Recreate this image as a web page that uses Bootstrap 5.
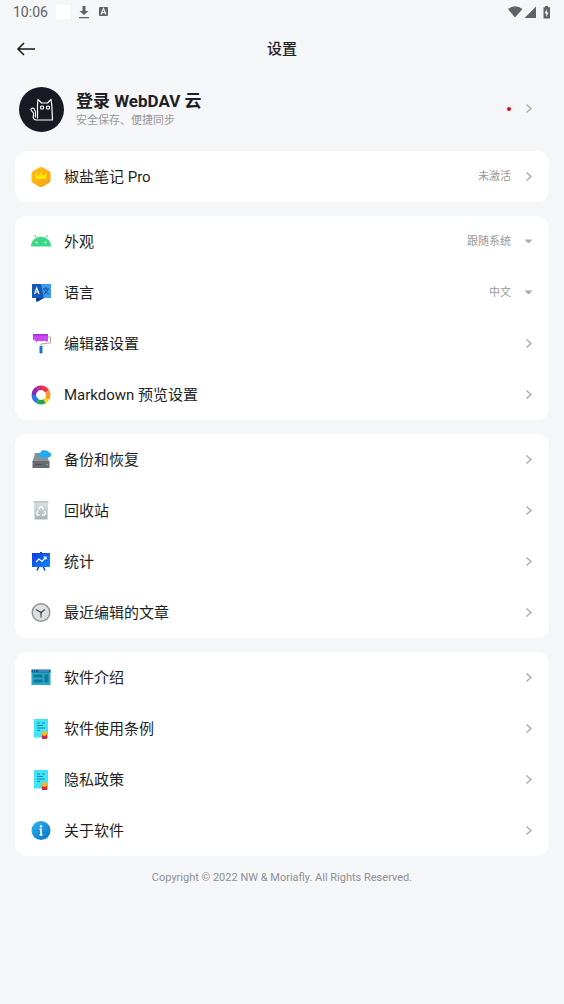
<!DOCTYPE html>
<html lang="zh-CN">
<head>
<meta charset="utf-8">
<meta name="viewport" content="width=device-width, initial-scale=1">
<title>设置</title>
<link href="https://cdn.jsdelivr.net/npm/bootstrap@5.3.0/dist/css/bootstrap.min.css" rel="stylesheet">
<style>
  body { background: #f5f6f8; color: #1d1f24; font-family: Roboto, "Noto Sans CJK SC", sans-serif; font-size: 15px; line-height: 20px; }
  a { color: inherit; text-decoration: none; }
  svg { display: block; flex: none; }
  .status-bar { height: 23px; padding: 0 13px; color: #606266; font-size: 14px; }
  .blank-app { width: 14px; height: 14px; background: #fff; }
  .top-bar { height: 52px; padding: 0 16px; }
  .top-bar h1 { font-size: 15px; line-height: 20px; font-weight: 500; }
  .side { width: 20px; }
  .profile { height: 68px; padding: 0 15px 0 4px; gap: 12px; }
  .profile-text { padding-top: 4px; }
  .avatar { width: 45px; height: 45px; background: #171a22; }
  .profile-name { font-size: 17px; line-height: 20px; font-weight: 700; }
  .note { font-size: 11px; line-height: 20px; color: #96989b; }
  .dot { width: 4px; height: 4px; background: #e60012; }
  .groups { padding: 0 15px; }
  .stack { gap: 14px; margin-top: 8px; }
  .group { border: 0; border-radius: 12px; background: #fff; overflow: hidden; }
  .item { height: 51px; padding: 0 15px 0 16px; gap: 13px; }
  .tail { gap: 11px; color: #96989b; font-size: 11px; }
  .pick { appearance: none; border: 0; background: none; padding: 0; color: inherit; font: inherit; text-align-last: right; outline-offset: 2px; }
  .pick option { color: #1d1f24; }
  footer { font-size: 11px; line-height: 16px; color: #8e9093; margin-top: 14px; }
</style>
</head>
<body>
<svg width="0" height="0" class="position-absolute" aria-hidden="true">
  <defs>
    <symbol id="chev" viewBox="0 0 12 12"><path d="M4.500 1.500L9 5.500l-4.500 4" fill="none" stroke="#a9abae" stroke-width="1.400"/></symbol>
    <symbol id="caret" viewBox="0 0 12 12"><path d="M3 3.500h7q0 1-3 3.500h-1Q3 4.500 3 3.500z" fill="#a9abae"/></symbol>
    <symbol id="doc" viewBox="0 0 20 20">
      <path d="M3 0h14v18.500H3z" fill="#43e3f8"/>
      <path d="M6 4h3M11 4h3M6 6.500h6M6 9h8M6 11.500h3" stroke="#1488a8" stroke-width="1"/>
      <path d="M11 15h5v5h-5z" fill="#d3264b"/><circle cx="13.500" cy="14.500" r="2.500" fill="#fdbd16"/>
    </symbol>
    <linearGradient id="gold" x2="1" y2="1"><stop stop-color="#ffc21d"/><stop offset="1" stop-color="#f6a313"/></linearGradient>
    <linearGradient id="screen" x2="1" y2="1"><stop stop-color="#1237dc"/><stop offset="1" stop-color="#0a8cff"/></linearGradient>
    <linearGradient id="blue" x2="1" y2="1"><stop stop-color="#2eb8ed"/><stop offset="1" stop-color="#0870cb"/></linearGradient>
    <linearGradient id="bin" x2="0" y2="1"><stop stop-color="#dde3e5"/><stop offset="1" stop-color="#a7b1b5"/></linearGradient>
  </defs>
</svg>

<div class="status-bar d-flex align-items-center justify-content-between">
  <div class="d-flex align-items-center gap-2">
    <span>10:06</span>
    <span class="blank-app"></span>
    <svg width="12" height="14" viewBox="0 0 12 14"><path d="M4.500 1h3v5h3L6 10 1.500 6h3zM1 12h10v1.300H1z" fill="#606266"/></svg>
    <svg width="11" height="11" viewBox="0 0 11 11"><rect x="1" y="1" width="9" height="9" rx="1" fill="#606266"/><path d="M3 8.500l2.500-6 2.500 6M4 6.600h3" fill="none" stroke="#f5f6f8" stroke-width="1.200"/></svg>
  </div>
  <svg width="44" height="14" viewBox="0 0 44 14"><path d="M1 4Q8-1.500 15.500 4L8 12.500z" fill="#606266"/><path d="M17.500 13L29 1.500V13z" fill="#606266"/><path d="M38 1h3v1.300h2V13.500h-6.500V2.300H38z" fill="#606266"/><path d="M40 4l-2.300 4.500h1.500V12l2.400-4.600H40z" fill="#f5f6f8"/></svg>
</div>

<header class="top-bar d-flex align-items-center">
  <a class="side" href="#" aria-label="返回"><svg width="20" height="20" viewBox="0 0 20 20"><path d="M19 10H2M8 4L2 10l6 6" fill="none" stroke="#17191c" stroke-width="1.500"/></svg></a>
  <h1 class="flex-grow-1 text-center m-0">设置</h1>
  <span class="side"></span>
</header>

<main class="groups">
  <a class="profile d-flex align-items-center" href="#">
    <span class="avatar rounded-circle d-flex align-items-center justify-content-center">
      <svg width="45" height="45" viewBox="0 0 45 45" fill="none" stroke="#fff" stroke-width="1.200" stroke-linejoin="round" stroke-linecap="round"><path d="M18.500 31V18l.500-5.500 3.500 3.500h6l3.500-3.500.800 5.500.700 15H18c-3.500 0-4.500-2.500-3.500-5 1-3.500-2.500-3-2.500-5.500 0-2 3-1.500 3.500 0 2 2.500.500 5 1 7.500"/><rect x="21.500" y="19" width="3" height="3" rx="1"/><rect x="27.500" y="19" width="3" height="3" rx="1"/></svg>
    </span>
    <span class="profile-text flex-grow-1"><span class="profile-name d-block">登录 WebDAV 云</span><span class="note d-block">安全保存、便捷同步</span></span>
    <span class="tail d-flex align-items-center"><span class="dot rounded-circle"></span><svg width="12" height="12"><use href="#chev"/></svg></span>
  </a>

  <div class="stack d-flex flex-column">
    <section class="group card">
      <a class="item d-flex align-items-center" href="#">
        <svg width="20" height="20" viewBox="0 0 20 20"><path d="M10 0q1 0 2 .500l6 3.500q1.500 1 1.500 2.500v7q0 1.500-1.500 2.500l-6 3.500q-2 1-4 0L2 16Q.500 15 .500 13.500v-7Q.500 5 2 4L8 .500Q9 0 10 0z" fill="url(#gold)"/><path d="M4 6l3.500 3L10 5l2.500 4L16 6l-1 6H5z" fill="#ffe600"/></svg>
        <span class="flex-grow-1">椒盐笔记 Pro</span>
        <span class="tail d-flex align-items-center">未激活<svg width="12" height="12"><use href="#chev"/></svg></span>
      </a>
    </section>

    <section class="group card">
      <div class="item d-flex align-items-center">
        <svg width="20" height="20" viewBox="0 0 20 20"><path d="M0 14.500a10 9.800 0 0 1 20 0z" fill="#36d986"/><path d="M3.500 3l2.300 4M16.500 3l-2.300 4" stroke="#36d986"/><circle cx="5.500" cy="10.500" r=".9" fill="#fff"/><circle cx="14.500" cy="10.500" r=".9" fill="#fff"/></svg>
        <label class="flex-grow-1" for="theme">外观</label>
        <span class="tail d-flex align-items-center"><select class="pick" id="theme"><option>跟随系统</option><option>浅色</option><option>深色</option></select><svg width="12" height="12"><use href="#caret"/></svg></span>
      </div>
      <div class="item d-flex align-items-center">
        <svg width="20" height="20" viewBox="0 0 20 20"><path d="M9 1h11v14h-8z" fill="#3c9df0"/><path d="M1 1h9l3 14H9l-4 4v-4H1z" fill="#1558b8"/><path d="M5 15h8l-7 4z" fill="#0b3e8c"/><path d="M3.500 11l2.200-6L8 11M4.300 9h2.900" fill="none" stroke="#fff" stroke-width="1.200"/><path d="M12 6h6M15 4v2M17 6q-1 4-4 5M13.500 7q1 3 4.500 4" fill="none" stroke="#134f9d" stroke-width="1"/></svg>
        <label class="flex-grow-1" for="lang">语言</label>
        <span class="tail d-flex align-items-center"><select class="pick" id="lang"><option>中文</option><option>English</option></select><svg width="12" height="12"><use href="#caret"/></svg></span>
      </div>
      <a class="item d-flex align-items-center" href="#">
        <svg width="20" height="20" viewBox="0 0 20 20"><path d="M17 3h2.500v6L10 10v3" fill="none" stroke="#b9a99c"/><path d="M2 0h15v7q-1 0-1 1t-1-1H6q-.500 3-1.500 0T2 7z" fill="#cd48f0"/><path d="M2 0h15v1.500H2z" fill="#a42ee0"/><path d="M8.500 12h3v7q-1.500 1-3 0z" fill="#1976d2"/></svg>
        <span class="flex-grow-1">编辑器设置</span>
        <span class="tail"><svg width="12" height="12"><use href="#chev"/></svg></span>
      </a>
      <a class="item d-flex align-items-center" href="#">
        <svg width="20" height="20" viewBox="0 0 20 20" fill="none" stroke-width="4.500"><path d="M10 2.800A7.200 7.200 0 0 1 16.200 6.400" stroke="#ed3545"/><path d="M16.200 6.400A7.200 7.200 0 0 1 16.200 13.600" stroke="#fb9829"/><path d="M16.200 13.600A7.200 7.200 0 0 1 13.600 16.200" stroke="#ffd21e"/><path d="M13.600 16.200A7.200 7.200 0 0 1 6.400 16.200" stroke="#27a551"/><path d="M6.400 16.200A7.200 7.200 0 0 1 2.800 10" stroke="#2878e8"/><path d="M2.800 10A7.200 7.200 0 0 1 6.400 3.800" stroke="#872bb5"/><path d="M6.400 3.800A7.200 7.200 0 0 1 10 2.800" stroke="#c92a79"/></svg>
        <span class="flex-grow-1">Markdown 预览设置</span>
        <span class="tail"><svg width="12" height="12"><use href="#chev"/></svg></span>
      </a>
    </section>

    <section class="group card">
      <a class="item d-flex align-items-center" href="#">
        <svg width="20" height="20" viewBox="0 0 20 20"><path d="M4 3h12l2 9H1.500z" fill="#8b9196"/><path d="M1.500 11h17v7h-17z" fill="#666d72"/><path d="M4 14.500h7" stroke="#4d5358"/><circle cx="16" cy="14.500" r=".8" fill="#3fd5ac"/><path d="M10 7.500a2.500 2.500 0 0 1-.500-5Q11-1 14 .500q3-.500 3.500 1.500a2.800 2.800 0 0 1 .500 5.500h-2.500q-1.500 1.500-3 .500z" fill="#26a9f4"/></svg>
        <span class="flex-grow-1">备份和恢复</span>
        <span class="tail"><svg width="12" height="12"><use href="#chev"/></svg></span>
      </a>
      <a class="item d-flex align-items-center" href="#">
        <svg width="20" height="20" viewBox="0 0 20 20"><path d="M3 1h14l-.500 17.500h-13z" fill="url(#bin)"/><path d="M2.500 0h15v2h-15z" fill="#c3cacd"/><path d="M7.500 8.500L9 6h2l1.500 2.500M13.500 10l1 2-1 2H11M8.500 14h-2l-1-2L7 9.500" fill="none" stroke="#fff" stroke-width="1.400"/></svg>
        <span class="flex-grow-1">回收站</span>
        <span class="tail"><svg width="12" height="12"><use href="#chev"/></svg></span>
      </a>
      <a class="item d-flex align-items-center" href="#">
        <svg width="20" height="20" viewBox="0 0 20 20"><path d="M8 14l-2 4.500M12 14l2 4.500" stroke="#173eac" stroke-width="1.500"/><path d="M10 0v2" stroke="#173eac" stroke-width="2"/><path d="M1 1h18v14H1z" fill="url(#screen)"/><path d="M5 10l3-3 3 2.500L15 5M12.500 5H15v2.500" fill="none" stroke="#fff" stroke-width="1.200"/></svg>
        <span class="flex-grow-1">统计</span>
        <span class="tail"><svg width="12" height="12"><use href="#chev"/></svg></span>
      </a>
      <a class="item d-flex align-items-center" href="#">
        <svg width="20" height="20" viewBox="0 0 20 20"><circle cx="10" cy="9.500" r="8.800" fill="#dedfe0" stroke="#8b9196" stroke-width="1.400"/><path d="M5 6.500l5 3 4-3M10 9.500v5" fill="none" stroke="#42474b" stroke-width="1.100"/><circle cx="10" cy="9.500" r="1" fill="#42474b"/></svg>
        <span class="flex-grow-1">最近编辑的文章</span>
        <span class="tail"><svg width="12" height="12"><use href="#chev"/></svg></span>
      </a>
    </section>

    <section class="group card">
      <a class="item d-flex align-items-center" href="#">
        <svg width="20" height="20" viewBox="0 0 20 20"><path d="M.500 2h19v15H.500z" fill="#27a7c7"/><path d="M.500 1.500h19v3H.500z" fill="#145b91"/><path d="M2 3h1M4 3h1M7 3h11" stroke="#64cbe5" stroke-width=".8"/><path d="M2.500 6.500h9v3h-9zM2.500 11.500h9v3h-9zM13.500 6.500h4v8h-4z" fill="#12799c"/></svg>
        <span class="flex-grow-1">软件介绍</span>
        <span class="tail"><svg width="12" height="12"><use href="#chev"/></svg></span>
      </a>
      <a class="item d-flex align-items-center" href="#">
        <svg width="20" height="20"><use href="#doc"/></svg>
        <span class="flex-grow-1">软件使用条例</span>
        <span class="tail"><svg width="12" height="12"><use href="#chev"/></svg></span>
      </a>
      <a class="item d-flex align-items-center" href="#">
        <svg width="20" height="20"><use href="#doc"/></svg>
        <span class="flex-grow-1">隐私政策</span>
        <span class="tail"><svg width="12" height="12"><use href="#chev"/></svg></span>
      </a>
      <a class="item d-flex align-items-center" href="#">
        <svg width="20" height="20" viewBox="0 0 20 20"><circle cx="10" cy="9.500" r="9.500" fill="url(#blue)"/><circle cx="10" cy="5.300" r="1.200" fill="#fff"/><path d="M8.500 8.300H10V14M8.500 14h3" fill="none" stroke="#fff" stroke-width="1.600"/></svg>
        <span class="flex-grow-1">关于软件</span>
        <span class="tail"><svg width="12" height="12"><use href="#chev"/></svg></span>
      </a>
    </section>
  </div>
</main>
<footer class="text-center">Copyright © 2022 NW &amp; Moriafly. All Rights Reserved.</footer>

<script src="https://cdn.jsdelivr.net/npm/bootstrap@5.3.0/dist/js/bootstrap.bundle.min.js"></script>
</body>
</html>
